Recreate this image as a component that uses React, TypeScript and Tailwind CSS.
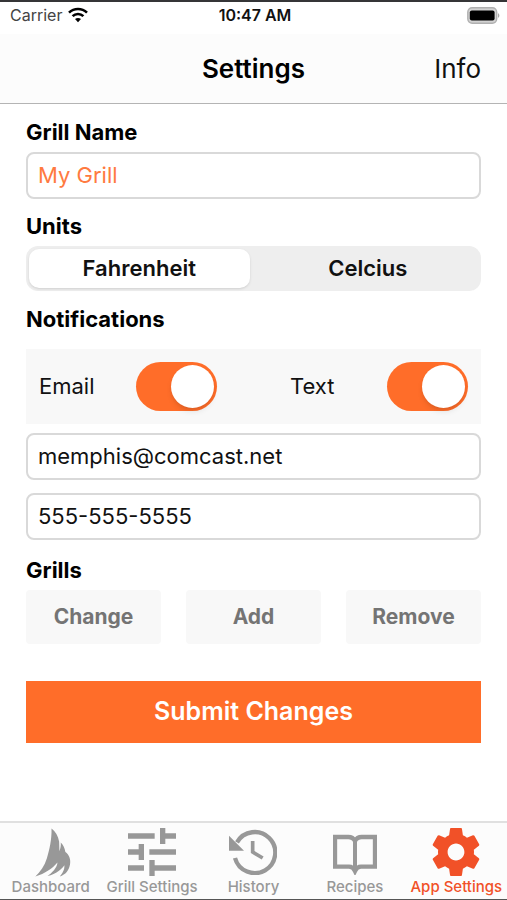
import { useState } from "react";
import type { ReactNode } from "react";

const inputClass =
  "block h-[47px] w-full rounded-lg border-2 border-[#d9d9d9] bg-white px-[10px] pb-0.5 text-[22px] outline-none";
const headingClass = "block text-[22px] leading-7 font-bold text-black";
const grillButtonClass =
  "h-[54px] rounded-sm bg-[#f8f8f8] text-[21px] font-bold text-[#747474]";

function WifiIcon() {
  return (
    <svg className="h-4 w-5" viewBox="0 0 20 16" fill="none" stroke="#000" strokeWidth="2.6" aria-hidden="true">
      <path d="M1 5.6C6.2.7 13.8.7 19 5.6" />
      <path d="M4.6 9.2C7.6 6.2 12.4 6.2 15.4 9.2" />
      <path d="M10 15.2 7 12.1c1.7-1.6 4.3-1.6 6 0Z" fill="#000" stroke="none" />
    </svg>
  );
}

function BatteryIcon() {
  return (
    <svg className="h-[17px] w-[33px]" viewBox="0 0 33 17" aria-hidden="true">
      <rect x="0.8" y="0.8" width="28.9" height="15.4" rx="4.4" fill="#d2d2d2" stroke="#b0b0b0" strokeWidth="1.4" />
      <rect x="2.8" y="3.5" width="24.8" height="10" rx="2" fill="#000" />
      <path d="M31 6.2c1.8.6 1.8 4 0 4.6Z" fill="#a9a9a9" />
    </svg>
  );
}

function FlameIcon() {
  return (
    <svg className="ml-1 h-[49px] w-9" viewBox="13 10 109 147" fill="currentColor" aria-hidden="true">
      <path d="M63 11C75 20 83 34 86 50C87 60 86 70 87 80C90 71 92 62 91 53C99 61 103 70 105 82C116 90 122 104 119 120C116 137 106 151 88 156C96 147 103 135 102 122C94 134 78 148 51 155C64 146 80 130 81 114C67 131 43 148 14 156C29 142 42 124 49 101C57 74 64 43 63 11Z" />
    </svg>
  );
}

function TuneIcon() {
  return (
    <svg className="size-12" viewBox="3 3 18 18" fill="currentColor" aria-hidden="true">
      <path d="M3 17v2h6v-2H3zM3 5v2h10V5H3zm10 16v-2h8v-2h-8v-2h-2v6h2zM7 9v2H3v2h4v2h2V9H7zm14 4v-2H11v2h10zm-6-4h2V7h4V5h-4V3h-2v6z" />
    </svg>
  );
}

function HistoryIcon() {
  return (
    <svg className="h-[46px] w-12" viewBox="0 0 144 138" fill="none" stroke="currentColor" aria-hidden="true">
      <path d="M24 40A61.5 61.5 0 1 1 18 87" strokeWidth="13" />
      <path d="M0 20V65H45Z" fill="currentColor" stroke="none" />
      <path d="M71 36V69L101 87" strokeWidth="11" />
    </svg>
  );
}

function BookIcon() {
  return (
    <svg className="h-[46px] w-11" viewBox="0 0 132 138" fill="none" stroke="currentColor" aria-hidden="true">
      <path d="M6 24H46Q60 24 66 36Q72 24 86 24H126V113H84Q72 113 66 126Q60 113 48 113H6Z" strokeWidth="13" />
      <path d="M66 34V126" strokeWidth="12" />
    </svg>
  );
}

function GearIcon() {
  return (
    <svg className="size-12" viewBox="2 2 20 20" fill="currentColor" aria-hidden="true">
      <path d="M19.43 12.98c.04-.32.07-.64.07-.98s-.03-.66-.07-.98l2.11-1.65c.19-.15.24-.42.12-.64l-2-3.46c-.12-.22-.39-.3-.61-.22l-2.49 1c-.52-.4-1.08-.73-1.69-.98l-.38-2.65C14.46 2.18 14.25 2 14 2h-4c-.25 0-.46.18-.49.42l-.38 2.65c-.61.25-1.17.59-1.69.98l-2.49-1c-.23-.09-.49 0-.61.22l-2 3.46c-.13.22-.07.49.12.64l2.11 1.65c-.04.32-.07.65-.07.98s.03.66.07.98l-2.11 1.65c-.19.15-.24.42-.12.64l2 3.46c.12.22.39.3.61.22l2.49-1c.52.4 1.08.73 1.69.98l.38 2.65c.03.24.24.42.49.42h4c.25 0 .46-.18.49-.42l.38-2.65c.61-.25 1.17-.59 1.69-.98l2.49 1c.23.09.49 0 .61-.22l2-3.46c.12-.22.07-.49-.12-.64l-2.11-1.65zM12 15.5c-1.93 0-3.5-1.57-3.5-3.5s1.57-3.5 3.5-3.5 3.5 1.57 3.5 3.5-1.57 3.5-3.5 3.5z" />
    </svg>
  );
}

function Toggle({ label, checked, onChange }: { label: string; checked: boolean; onChange: (v: boolean) => void }) {
  return (
    <label className="flex items-center justify-between text-[22px]">
      {label}
      <input
        type="checkbox"
        role="switch"
        checked={checked}
        onChange={(e) => onChange(e.target.checked)}
        className="flex h-[49px] w-[81px] appearance-none rounded-full bg-gray-300 p-[3px] before:size-[43px] before:rounded-full before:bg-white before:shadow-md before:content-[''] checked:justify-end checked:bg-[#ff6d29]"
      />
    </label>
  );
}

function Tab({ label, active, children }: { label: string; active?: boolean; children: ReactNode }) {
  return (
    <a
      href="#"
      aria-current={active ? "page" : undefined}
      className={`flex flex-col items-center text-[15px] leading-5 font-medium whitespace-nowrap ${active ? "text-[#f15128]" : "text-[#989898]"}`}
    >
      <span className="flex h-[50px] items-center">{children}</span>
      {label}
    </a>
  );
}

export default function App() {
  const [name, setName] = useState("My Grill");
  const [units, setUnits] = useState("Fahrenheit");
  const [emailOn, setEmailOn] = useState(true);
  const [textOn, setTextOn] = useState(true);
  const [email, setEmail] = useState("memphis@comcast.net");
  const [phone, setPhone] = useState("555-555-5555");

  return (
    <div className="flex min-h-screen flex-col border-t-2 border-b border-t-[#353537] border-b-[#555] bg-white font-['Inter',sans-serif] text-[#111]">
      {/* Status bar */}
      <div className="grid h-8 grid-cols-3 items-center pr-[7px] pb-1.5 pl-[10px] text-base">
        <div className="flex items-center gap-1.5 text-[#444]">
          Carrier
          <WifiIcon />
        </div>
        <div className="text-center font-semibold">10:47 AM</div>
        <div className="flex justify-end">
          <BatteryIcon />
        </div>
      </div>

      <header className="grid h-[70px] grid-cols-3 items-center border-b border-[#b4b4b4] bg-[#fcfcfc] px-[26px] text-[26px]">
        <h1 className="col-start-2 text-center font-semibold text-black">Settings</h1>
        <button type="button" className="justify-self-end">Info</button>
      </header>

      <main className="flex-1 px-[26px] pt-[14px] pb-8">
        <form onSubmit={(e) => e.preventDefault()}>
          <label htmlFor="grill-name" className={headingClass}>Grill Name</label>
          <input
            id="grill-name"
            value={name}
            onChange={(e) => setName(e.target.value)}
            className={`${inputClass} mt-1.5 text-[#ff7a40]`}
          />

          <fieldset className="mt-[13px]">
            <legend className={headingClass}>Units</legend>
            <div className="mt-1.5 grid h-[45px] grid-cols-2 gap-2 rounded-xl bg-[#eee] p-[3px]">
              {["Fahrenheit", "Celcius"].map((unit) => (
                <label
                  key={unit}
                  className="flex items-center justify-center rounded-[10px] text-[22px] font-semibold has-checked:bg-white has-checked:shadow-sm"
                >
                  <input
                    type="radio"
                    name="units"
                    value={unit}
                    checked={units === unit}
                    onChange={() => setUnits(unit)}
                    className="sr-only"
                  />
                  {unit}
                </label>
              ))}
            </div>
          </fieldset>

          <h2 className={`${headingClass} mt-[14px]`}>Notifications</h2>
          <div className="mt-4 grid h-[75px] grid-cols-2 items-center gap-[73px] bg-[#f8f8f8] px-[13px]">
            <Toggle label="Email" checked={emailOn} onChange={setEmailOn} />
            <Toggle label="Text" checked={textOn} onChange={setTextOn} />
          </div>
          <input
            type="email"
            aria-label="Email address"
            value={email}
            onChange={(e) => setEmail(e.target.value)}
            className={`${inputClass} mt-[9px]`}
          />
          <input
            type="tel"
            aria-label="Phone number"
            value={phone}
            onChange={(e) => setPhone(e.target.value)}
            className={`${inputClass} mt-[13px]`}
          />

          <h2 className={`${headingClass} mt-4`}>Grills</h2>
          <div className="mt-1.5 grid grid-cols-3 gap-[25px]">
            <button type="button" className={grillButtonClass}>Change</button>
            <button type="button" className={grillButtonClass}>Add</button>
            <button type="button" className={grillButtonClass}>Remove</button>
          </div>

          <button type="submit" className="mt-[37px] h-[62px] w-full bg-[#ff6d29] text-[25px] font-semibold text-white">
            Submit Changes
          </button>
        </form>
      </main>

      <nav className="grid h-[78px] grid-cols-5 border-t-2 border-[#e0e0e0] bg-[#fcfcfc] pt-1">
        <Tab label="Dashboard"><FlameIcon /></Tab>
        <Tab label="Grill Settings"><TuneIcon /></Tab>
        <Tab label="History"><HistoryIcon /></Tab>
        <Tab label="Recipes"><BookIcon /></Tab>
        <Tab label="App Settings" active><GearIcon /></Tab>
      </nav>
    </div>
  );
}
